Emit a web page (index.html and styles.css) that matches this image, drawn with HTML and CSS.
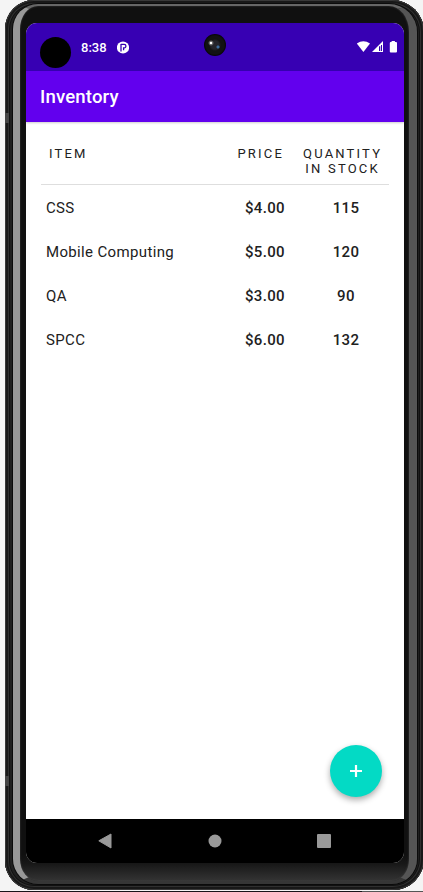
FILE: index.html
```html
<!DOCTYPE html>
<html lang="en">
<head>
<meta charset="utf-8">
<title>Inventory</title>
<link rel="stylesheet" href="styles.css">
</head>
<body>
<div class="phone">
  <div class="rim">
    <div class="screen">
      <header class="status">
        <span class="cutout"></span>
        <span class="time">8:38</span>
        <svg class="app-icon" width="12" height="13" viewBox="0 0 12 13"><circle cx="6" cy="6.5" r="6.1" fill="#fff"/><path d="M4 2.9v7.6M4 3.4h3.2q1.7 0 1.7 1.7T7.2 6.8H6.6v2.4" fill="none" stroke="#3700b3" stroke-width="1.3"/></svg>
        <span class="camera"></span>
        <svg class="signals" width="42" height="14" viewBox="0 0 42 14" fill="#fff"><path d="M.8 3.5Q7.4-1.2 14 3.5L7.4 12Z"/><path d="M27 1v11H16Z"/><path d="M23 6.2h1.3v4.9H23zM25 5h1v6.1h-1z" fill="#3700b3"/><path d="M35.6 1h3.3v1H40q1 0 1 1v8.6q0 1-1 1h-5.2q-1 0-1-1V3q0-1 1-1h.8Z"/></svg>
      </header>
      <h1 class="appbar">Inventory</h1>
      <main class="content">
        <div class="row head"><span class="item">ITEM</span><span class="price">PRICE</span><span class="qty">QUANTITY<br>IN STOCK</span></div>
        <div class="row"><span class="item">CSS</span><span class="price">$4.00</span><span class="qty">115</span></div>
        <div class="row"><span class="item">Mobile Computing</span><span class="price">$5.00</span><span class="qty">120</span></div>
        <div class="row"><span class="item">QA</span><span class="price">$3.00</span><span class="qty">90</span></div>
        <div class="row"><span class="item">SPCC</span><span class="price">$6.00</span><span class="qty">132</span></div>
        <button class="fab" aria-label="Add item"><svg width="12" height="12" viewBox="0 0 12 12"><path d="M6 0v12M0 6h12" stroke="#fff" stroke-width="2.2"/></svg></button>
      </main>
      <nav class="nav">
        <svg width="14" height="16" viewBox="0 0 14 16"><path d="M.8 7.8 13 1v14Z" fill="#999" stroke="#999" stroke-linejoin="round"/></svg>
        <svg width="14" height="14" viewBox="0 0 14 14"><circle cx="7" cy="7" r="6.5" fill="#999"/></svg>
        <svg width="14" height="14" viewBox="0 0 14 14"><rect width="14" height="14" rx="1" fill="#999"/></svg>
      </nav>
    </div>
  </div>
  <i class="notch upper"></i><i class="notch lower"></i>
</div>
<div class="desk"></div>
</body>
</html>
```
FILE: styles.css
```css
* { box-sizing: border-box; }
body { margin: 0; width: 423px; height: 892px; overflow: hidden; background: #f4f4f4; font-family: Roboto, sans-serif; color: #212121; }
.phone { position: relative; margin-left: 5px; width: 419px; height: 890px; padding: 4px 7px 6px 8px; border-radius: 29px 32px 31px 29px; background: #202020;
  box-shadow: inset 0 0 0 1px #383838, inset 0 0 0 3px #181818, inset 0 0 0 4px #303030, inset 0 0 0 5px #111; }
.rim { height: 880px; padding: 17px 5px 0 6px; border-style: solid; border-width: 2px 8px 3px 7px; border-color: #666 #555 #363636 #989898; border-radius: 25px 28px 25px 25px;
  background: linear-gradient(#101010 0 97%, #171717 98%, #343434) padding-box; box-shadow: 0 0 0 1px #0b0b0b, inset 0 0 2px #444; }
.screen { width: 378px; height: 840px; border-radius: 11px; overflow: hidden; background: #fff; display: flex; flex-direction: column; }
.status { position: relative; height: 48px; flex: none; background: #3700b3; display: flex; align-items: center; padding: 0 6px 0 14px; color: #fff; }
.cutout { width: 31px; height: 31px; margin-top: 10px; border-radius: 50%; background: #000; }
.time { margin-left: 10px; font-size: 13px; font-weight: 500; width: 36px; letter-spacing: 0; }
.app-icon { display: block; }
.signals { margin-left: auto; }
.camera { position: absolute; left: 178px; top: 11px; width: 22px; height: 22px; border-radius: 50%;
  background: radial-gradient(circle at 7px 9px, #fff 0 .8px, #777 1.5px, transparent 3px), radial-gradient(circle at 14px 13px, #3c6b9c 0 1px, transparent 2px), radial-gradient(circle, #24242a 0 4px, #121212 6px 9px, #050505 11px); }
.appbar { margin: 0; height: 51px; flex: none; padding-left: 14px; line-height: 53px; background: #6200ee; color: #fff; font-size: 18.6px; font-weight: 500; letter-spacing: .15px; z-index: 1; box-shadow: 0 1px 2px #0003; }
.content { position: relative; flex: 1; padding: 20px 15px 0; }
.row { display: grid; grid-template-columns: 185px 77px 1fr; height: 44px; align-items: center; font-size: 15px; letter-spacing: .35px; }
.item { padding-left: 5px; }
.price { text-align: right; padding-right: 18px; font-weight: 500; }
.qty { text-align: center; font-weight: 500; }
.head { height: 43px; padding-top: 4px; align-items: start; border-bottom: 1px solid #dedede; margin-bottom: 1px; font-size: 13px; line-height: 15px; letter-spacing: 2.2px; }
.head span { font-weight: 400; }
.head .item { padding-left: 8px; }
.head .price { padding-right: 19px; }
.head .qty { padding-right: 7px; }
.fab { position: absolute; right: 22px; bottom: 22px; width: 52px; height: 52px; padding: 0; border: 0; border-radius: 50%; background: #03dac5; display: grid; place-items: center; box-shadow: 0 3px 6px #0005; }
.nav { flex: none; height: 44px; background: #000; display: flex; align-items: center; justify-content: space-between; padding: 0 73px 0 72px; }
.notch { position: absolute; left: 0; width: 4px; height: 10px; background: #444; }
.upper { top: 113px; }
.lower { top: 776px; }
.desk { height: 1px; margin-top: 1px; background: linear-gradient(90deg, #181418 0 362px, #555 362px); }
```
